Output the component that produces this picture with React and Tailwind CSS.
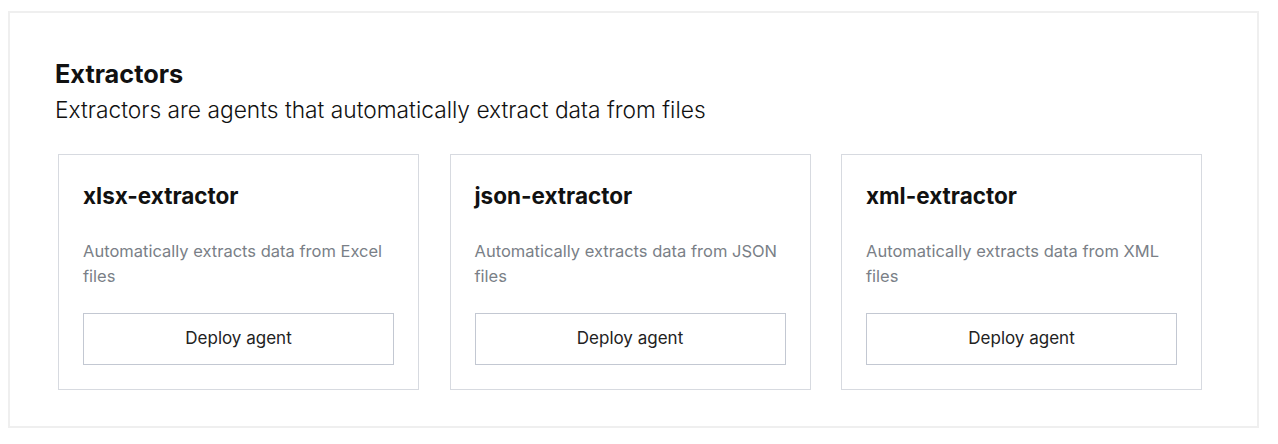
import React from 'react';

const extractors = [
  { name: 'xlsx-extractor', description: 'Automatically extracts data from Excel files' },
  { name: 'json-extractor', description: 'Automatically extracts data from JSON files' },
  { name: 'xml-extractor', description: 'Automatically extracts data from XML files' },
];

function ExtractorCard({ name, description }) {
  return (
    <div className="border border-[#d7dae0] bg-white px-[24px] pt-[27px] pb-[24px] flex flex-col">
      <h3 className="text-[22.5px] leading-[28px] font-bold text-[#111]">{name}</h3>
      <p className="mt-[29px] text-[16.5px] leading-[25px] text-[#7a7f87]">{description}</p>
      <button
        type="button"
        className="mt-[24px] h-[52px] w-full border border-[#c3c8d2] bg-white text-[17px] text-[#222] hover:bg-gray-50"
      >
        Deploy agent
      </button>
    </div>
  );
}

export default function App() {
  return (
    <div className="min-h-screen bg-white font-['Inter',sans-serif] pt-[11px] pl-[8px] pr-[19px]">
      <div className="border-2 border-[#efefef] h-[417px] pl-[45px] pt-[46px]">
        <h2 className="text-[25.3px] leading-[30px] font-bold text-[#111]">Extractors</h2>
        <p className="mt-[7px] text-[22.75px] leading-[28px] font-light text-[#111]">
          Extractors are agents that automatically extract data from files
        </p>
        <div className="mt-[30px] ml-[3px] grid grid-cols-[361px_361px_361px] gap-[30.5px]">
          {extractors.map(e => (
            <ExtractorCard key={e.name} {...e} />
          ))}
        </div>
      </div>
    </div>
  );
}
